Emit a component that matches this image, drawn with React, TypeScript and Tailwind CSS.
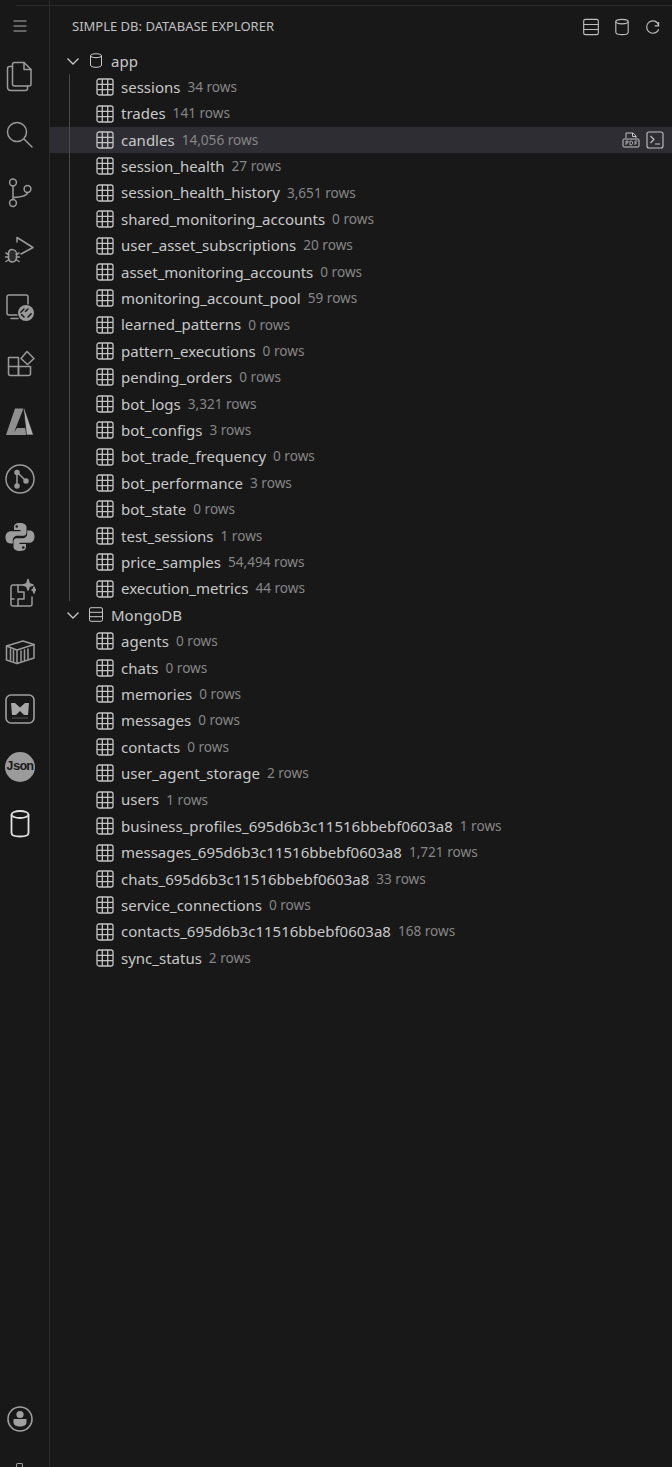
import React from "react";

const S = ({ children, size = 32, vb = 32, className = "" }: { children: React.ReactNode; size?: number; vb?: number; className?: string }) => (
  <svg width={size} height={size} viewBox={`0 0 ${vb} ${vb}`} fill="none" stroke="currentColor" strokeWidth={1.5} strokeLinecap="round" strokeLinejoin="round" className={className}>
    {children}
  </svg>
);

const TableIcon = () => (
  <svg width="18" height="18" viewBox="0 0 18 18" fill="none" stroke="#c4c4c4" strokeWidth="1.3" className="shrink-0">
    <rect x="1" y="1" width="16" height="16" rx="2" />
    <path d="M1 6.3H17M1 11.7H17M6.3 1V17M11.7 1V17" />
  </svg>
);

const Cylinder = ({ size = 16 }: { size?: number }) => (
  <svg width={size} height={size} viewBox="0 0 16 16" fill="none" stroke="currentColor" strokeWidth="1">
    <ellipse cx="8" cy="3.2" rx="5.5" ry="2" />
    <path d="M2.5 3.2V12.6C2.5 13.8 5 14.8 8 14.8C11 14.8 13.5 13.8 13.5 12.6V3.2" />
  </svg>
);

const Server = ({ size = 16 }: { size?: number }) => (
  <svg width={size} height={size} viewBox="0 0 16 16" fill="none" stroke="currentColor" strokeWidth="1">
    <rect x="1.5" y="1.2" width="13" height="13.6" rx="1.5" />
    <path d="M1.5 5.8H14.5M1.5 10.2H14.5" />
  </svg>
);

const activity: React.ReactNode[] = [
  <S key="files">
    <path d="M10.5 1.5H20L27 8.5V23C27 24.1 26.1 25 25 25H10.5C9.4 25 8.5 24.1 8.5 23V3.5C8.5 2.4 9.4 1.5 10.5 1.5Z" />
    <path d="M20 1.5V8.5H27" />
    <path d="M8.5 5.5H5.5C4.4 5.5 3.5 6.4 3.5 7.5V26C3.5 28 5 29.5 7 29.5H21.5C22.6 29.5 23.5 28.6 23.5 27.5V25" />
  </S>,
  <S key="search">
    <circle cx="13" cy="14" r="9.5" />
    <path d="M20 21L28 29" />
  </S>,
  <S key="git">
    <circle cx="9" cy="6.5" r="3.4" />
    <circle cx="9" cy="27" r="3.4" />
    <circle cx="23.5" cy="13" r="3.4" />
    <path d="M9 10V23.5M23.5 16.5C23.5 20 18 21 9.5 21.5" />
  </S>,
  <S key="debug">
    <path d="M13 9V4.5L29 14.5L17 21" />
    <path d="M8 16.5C10.5 16.5 12.5 18.5 12.5 21V25C12.5 27.2 10.5 29 8.5 29C6 29 4.5 27.2 4.5 25V21C4.5 18.5 5.5 16.5 8 16.5Z" fill="currentColor" fillOpacity="0.15" />
    <path d="M2 20L4.5 21.5M15 20L12.5 21.5M1.5 24H4.5M15.5 24H12.5M2 28.5L5 26.5M15 28.5L12 26.5" />
  </S>,
  <S key="remote">
    <path d="M13 24H5C3.9 24 3 23.1 3 22V6C3 4.9 3.9 4 5 4H22C23.1 4 24 4.9 24 6V13" />
    <path d="M7 27.5H14" />
    <circle cx="22" cy="22" r="8" fill="#9a9a9a" stroke="none" />
    <path d="M20 18L16.8 21.2M20 26L17.5 23.5M24 18L21.5 20.5M24 26L27.2 22.8" stroke="#181818" />
  </S>,
  <S key="ext">
    <path d="M4.5 9.5H14.5V27.5H6.5C5.4 27.5 4.5 26.6 4.5 25.5V9.5Z" />
    <path d="M4.5 18.5H26.5M14.5 18.5V27.5H24.5C25.6 27.5 26.5 26.6 26.5 25.5V18.5" />
    <path d="M23 3.5L30 10.5L23.5 16.5L17 10.5Z" />
  </S>,
  <svg key="azure" width="32" height="32" viewBox="0 0 32 32">
    <path d="M11 2.5H19.5L9 29H2Z" fill="#8f8f8f" />
    <path d="M13 22H21L24 29H8Z" fill="#8f8f8f" />
    <path d="M19.5 2.5H20.5L29.5 29H22.5Z" fill="#b0b0b0" stroke="#181818" strokeWidth="0.7" />
  </svg>,
  <S key="graph">
    <circle cx="16" cy="16" r="14" />
    <path d="M13 9V23M13 9L22 18" />
    <circle cx="13" cy="9.5" r="2" fill="currentColor" />
    <circle cx="13" cy="23" r="2" fill="currentColor" />
    <circle cx="22" cy="18" r="2" fill="currentColor" />
  </S>,
  <svg key="py" width="32" height="32" viewBox="0 0 32 32" fill="#9c9c9c">
    <path d="M15.8 2C11 2 10 4 10 6.2V9H16.5V10.2H7C4 10.2 1.5 12.2 1.5 16.3C1.5 20.4 3.6 22.5 6.3 22.5H8.8V19.3C8.8 16.8 11 14.8 13.3 14.8H19.5C21.5 14.8 22.5 13.4 22.5 11.5V6.2C22.5 3.7 20.2 2 15.8 2ZM12.7 4.2A1.3 1.3 0 1 1 12.7 6.8A1.3 1.3 0 1 1 12.7 4.2Z" />
    <path d="M16.2 30C21 30 22 28 22 25.8V23H15.5V21.8H25C28 21.8 30.5 19.8 30.5 15.7C30.5 11.6 28.4 9.5 25.7 9.5H23.2V12.7C23.2 15.2 21 17.2 18.7 17.2H12.5C10.5 17.2 9.5 18.6 9.5 20.5V25.8C9.5 28.3 11.8 30 16.2 30ZM19.3 27.8A1.3 1.3 0 1 1 19.3 25.2A1.3 1.3 0 1 1 19.3 27.8Z" />
  </svg>,
  <S key="copilot">
    <path d="M19 7H9C7.9 7 7 7.9 7 9V26C7 27.1 7.9 28 9 28H26C27.1 28 28 27.1 28 26V19" />
    <path d="M14 7V14H20V21H14V28M7 21H10" />
    <path d="M24 1.5L25.3 5.7L29 7L25.3 8.3L24 12L22.7 8.3L19 7L22.7 5.7Z" fill="currentColor" />
    <path d="M30 9L30.7 11.3L32 12L30.7 12.7L30 15L29.3 12.7L28 12L29.3 11.3Z" fill="currentColor" />
  </S>,
  <S key="container">
    <path d="M2.5 10L19 5L30 8.5V22L13 27.5L2.5 24Z" />
    <path d="M2.5 10L13 14V27.5M13 14L30 8.5" />
    <path d="M6.5 13V24M9.5 14V25M17 15V25M20.5 14V24M24 13V23" />
  </S>,
  <svg key="mdb" width="32" height="32" viewBox="0 0 32 32" fill="none">
    <rect x="2" y="2" width="28" height="28" rx="5" stroke="#a0a0a0" strokeWidth="1.6" />
    <path d="M7 10L11 10L16 14.5L21 10L25 10L24 22L20 22L16 18L12 22L8 22Z" fill="#a8a8a8" />
    <path d="M8 25H24" stroke="#555" strokeWidth="1" />
  </svg>,
  <div key="json" className="flex h-[30px] w-[30px] items-center justify-center rounded-full bg-[#9b9b9b] text-[13px] font-bold tracking-[-1px] text-[#1a1a1a] [font-family:'Liberation_Mono',monospace]">
    Json
  </div>,
  <svg key="db" width="32" height="32" viewBox="0 0 32 32" fill="none" stroke="#e2e2e2" strokeWidth="1.8">
    <ellipse cx="16" cy="6.5" rx="8.5" ry="3.5" />
    <path d="M7.5 6.5V25C7.5 27 11 28.5 16 28.5C21 28.5 24.5 27 24.5 25V6.5" />
  </svg>,
];

type Row = [string, string, string?];
const app: Row[] = [
  ["sessions", "34 rows"], ["trades", "141 rows"], ["candles", "14,056 rows", "active"], ["session_health", "27 rows"],
  ["session_health_history", "3,651 rows"], ["shared_monitoring_accounts", "0 rows"], ["user_asset_subscriptions", "20 rows"],
  ["asset_monitoring_accounts", "0 rows"], ["monitoring_account_pool", "59 rows"], ["learned_patterns", "0 rows"],
  ["pattern_executions", "0 rows"], ["pending_orders", "0 rows"], ["bot_logs", "3,321 rows"], ["bot_configs", "3 rows"],
  ["bot_trade_frequency", "0 rows"], ["bot_performance", "3 rows"], ["bot_state", "0 rows"], ["test_sessions", "1 rows"],
  ["price_samples", "54,494 rows"], ["execution_metrics", "44 rows"],
];
const mongo: Row[] = [
  ["agents", "0 rows"], ["chats", "0 rows"], ["memories", "0 rows"], ["messages", "0 rows"], ["contacts", "0 rows"],
  ["user_agent_storage", "2 rows"], ["users", "1 rows"], ["business_profiles_695d6b3c11516bbebf0603a8", "1 rows"],
  ["messages_695d6b3c11516bbebf0603a8", "1,721 rows"], ["chats_695d6b3c11516bbebf0603a8", "33 rows"], ["service_connections", "0 rows"],
  ["contacts_695d6b3c11516bbebf0603a8", "168 rows"], ["sync_status", "2 rows"],
];

const TreeRow = ({ row }: { row: Row }) => (
  <div className={`flex h-[26.4px] items-center pl-[46px] ${row[2] ? "bg-[#2d2d33]" : ""}`}>
    <TableIcon />
    <span className="ml-[7px] text-[15px] text-[#c8c8c8]">{row[0]}</span>
    <span className="ml-[7px] text-[13.6px] text-[#868686]">{row[1]}</span>
    {row[2] && (
      <div className="ml-auto mr-[8px] flex items-center gap-[6px] text-[#c4c4c4]">
        <svg width="18" height="18" viewBox="0 0 18 18" fill="none" stroke="currentColor" strokeWidth="1">
          <path d="M4 7V2H11L14 5V7" />
          <path d="M10.5 2V5.5H14" />
          <rect x="1" y="8" width="16" height="8" rx="1" />
          <path d="M4 14V10H6V12H4M8 10V14H9.5L10.5 12.5V11L9.5 10ZM13 14V10H15.5M13 12H15" strokeWidth="0.8" />
        </svg>
        <svg width="18" height="18" viewBox="0 0 18 18" fill="none" stroke="currentColor" strokeWidth="1.1">
          <rect x="1" y="1" width="16" height="16" rx="2" />
          <path d="M4.5 5L8 8.5L4.5 12M9 13H14" />
        </svg>
      </div>
    )}
  </div>
);

const Header = ({ icon, label }: { icon: React.ReactNode; label: string }) => (
  <div className="flex h-[26.4px] items-center pl-[15px] text-[#c8c8c8]">
    <svg width="16" height="16" viewBox="0 0 16 16" fill="none" stroke="currentColor" strokeWidth="1.3" className="shrink-0">
      <path d="M2.5 5.5L8 11L13.5 5.5" />
    </svg>
    <span className="ml-[7px] flex w-[16px] justify-center">{icon}</span>
    <span className="ml-[7px] text-[15px]">{label}</span>
  </div>
);

export default function App() {
  return (
    <div className="flex h-[1467px] w-[672px] overflow-hidden bg-[#181818] [font-family:'Noto_Sans','Open_Sans',sans-serif]">
      <div className="flex w-[50px] shrink-0 flex-col items-center border-r border-[#2c2c2c] pr-[10px] text-[#9a9a9a]">
        <div className="flex h-[48px] shrink-0 items-center justify-center pt-[4px]">
          <svg width="16" height="16" viewBox="0 0 16 16" fill="none" stroke="#b0b0b0" strokeWidth="1.1">
            <path d="M1.5 3H14.5M1.5 8H14.5M1.5 13H14.5" />
          </svg>
        </div>
        {activity.map((a, i) => (
          <div key={i} className="flex h-[57.5px] shrink-0 items-center justify-center">{a}</div>
        ))}
        <div className="mt-auto flex h-[58px] shrink-0 items-start justify-center">
          <svg width="28" height="28" viewBox="0 0 28 28" fill="#a0a0a0">
            <circle cx="14" cy="14" r="12" fill="none" stroke="#a0a0a0" strokeWidth="1.6" />
            <circle cx="14" cy="9.5" r="3.6" />
            <path d="M7.5 14H20.5V17C20.5 20 18 21.5 14 21.5C10 21.5 7.5 20 7.5 17Z" />
          </svg>
        </div>
        <div className="h-[4px] w-[7px] shrink-0 rounded-t-[2px] border-x border-t border-[#a0a0a0]" />
      </div>
      <div className="relative flex min-w-0 flex-1 flex-col">
        <div className="absolute left-[-34px] right-0 top-[5px] h-px bg-[#2a2a2a]" />
        <div className="flex h-[47.6px] shrink-0 items-center justify-between pl-[22px] pr-[10px] pt-[6px]">
          <span className="text-[13px] text-[#c0c0c0]">SIMPLE DB: DATABASE EXPLORER</span>
          <div className="flex items-center gap-[13px] text-[#bdbdbd]">
            <Server size={18} />
            <Cylinder size={18} />
            <svg width="18" height="18" viewBox="0 0 16 16" fill="none" stroke="currentColor" strokeWidth="1">
              <path d="M13 3.5V7H9.5" />
              <path d="M13 7C12.3 4.2 10 2.5 7.8 2.5C4.8 2.5 2.4 5 2.4 8C2.4 11 4.8 13.5 7.8 13.5C10.2 13.5 12.2 12 13 10" />
            </svg>
          </div>
        </div>
        <div className="relative">
          <Header icon={<Cylinder size={17} />} label="app" />
          <div className="absolute left-[18.5px] top-[26px] h-[527px] w-px bg-[#4a4a4a]" />
          {app.map((r) => <TreeRow key={r[0]} row={r} />)}
          <Header icon={<Server size={17} />} label="MongoDB" />
          {mongo.map((r) => <TreeRow key={r[0]} row={r} />)}
        </div>
      </div>
    </div>
  );
}
